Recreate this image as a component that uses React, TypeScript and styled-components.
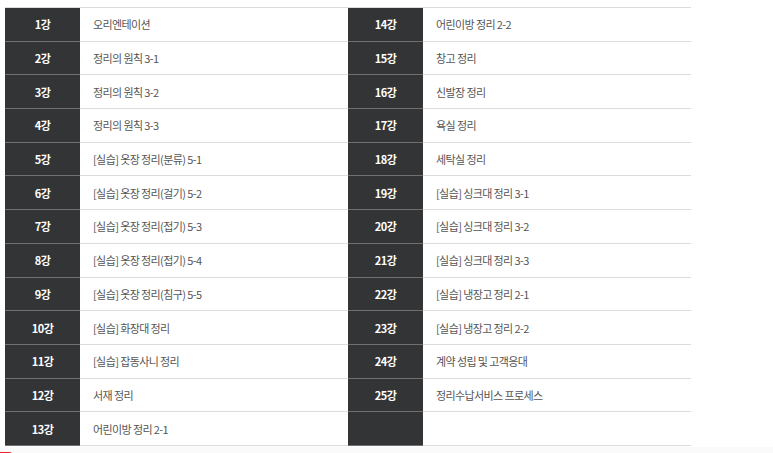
import React from "react";
import styled, { createGlobalStyle } from "styled-components";

const Global = createGlobalStyle`
  html, body { margin: 0; padding: 0; background: #fff; }
  body { font-family: "Noto Sans CJK KR", "Noto Sans", sans-serif; }
`;

const Page = styled.div`
  width: 773px;
  height: 453px;
  overflow: hidden;
  display: flex;
  flex-direction: column;
`;

const Tables = styled.div`
  display: flex;
  padding: 7px 0 0 5px;
`;

const Table = styled.div`
  width: 343px;
  border-top: 1px solid #dcdcdc;
  display: flex;
  flex-direction: column;
`;

const Row = styled.div`
  display: flex;
  height: 33.69px;
  box-sizing: border-box;
`;

const Num = styled.div`
  width: 75px;
  flex: none;
  background: #333435;
  border-bottom: 1px solid #707070;
  color: #fff;
  font-weight: 700;
  font-size: 11px;
  letter-spacing: -0.5px;
  display: flex;
  align-items: center;
  justify-content: center;
  box-sizing: border-box;
`;

const Title = styled.div`
  flex: 1;
  border-bottom: 1px solid #dcdcdc;
  color: #555;
  font-size: 11px;
  letter-spacing: -0.6px;
  padding-left: 13px;
  display: flex;
  align-items: center;
  box-sizing: border-box;
`;

const Footer = styled.div`
  margin-top: 1px;
  flex: 1;
  background: #fafafa;
  position: relative;
`;

const RedTab = styled.div`
  position: absolute;
  left: 0;
  top: 5px;
  width: 13px;
  height: 10px;
  border-radius: 0 4px 0 0;
  background: #e8262a;
`;

const left: [string, string][] = [
  ["1강", "오리엔테이션"],
  ["2강", "정리의 원칙 3-1"],
  ["3강", "정리의 원칙 3-2"],
  ["4강", "정리의 원칙 3-3"],
  ["5강", "[실습] 옷장 정리(분류) 5-1"],
  ["6강", "[실습] 옷장 정리(걸기) 5-2"],
  ["7강", "[실습] 옷장 정리(접기) 5-3"],
  ["8강", "[실습] 옷장 정리(접기) 5-4"],
  ["9강", "[실습] 옷장 정리(침구) 5-5"],
  ["10강", "[실습] 화장대 정리"],
  ["11강", "[실습] 잡동사니 정리"],
  ["12강", "서재 정리"],
  ["13강", "어린이방 정리 2-1"],
];

const right: [string, string][] = [
  ["14강", "어린이방 정리 2-2"],
  ["15강", "창고 정리"],
  ["16강", "신발장 정리"],
  ["17강", "욕실 정리"],
  ["18강", "세탁실 정리"],
  ["19강", "[실습] 싱크대 정리 3-1"],
  ["20강", "[실습] 싱크대 정리 3-2"],
  ["21강", "[실습] 싱크대 정리 3-3"],
  ["22강", "[실습] 냉장고 정리 2-1"],
  ["23강", "[실습] 냉장고 정리 2-2"],
  ["24강", "계약 성립 및 고객응대"],
  ["25강", "정리수납서비스 프로세스"],
  ["", ""],
];

const Lessons = ({ rows }: { rows: [string, string][] }) => (
  <Table>
    {rows.map(([n, t], i) => (
      <Row key={i}>
        <Num>{n}</Num>
        <Title>{t}</Title>
      </Row>
    ))}
  </Table>
);

export default function App() {
  return (
    <>
      <Global />
      <Page>
        <Tables>
          <Lessons rows={left} />
          <Lessons rows={right} />
        </Tables>
        <Footer>
          <RedTab />
        </Footer>
      </Page>
    </>
  );
}
